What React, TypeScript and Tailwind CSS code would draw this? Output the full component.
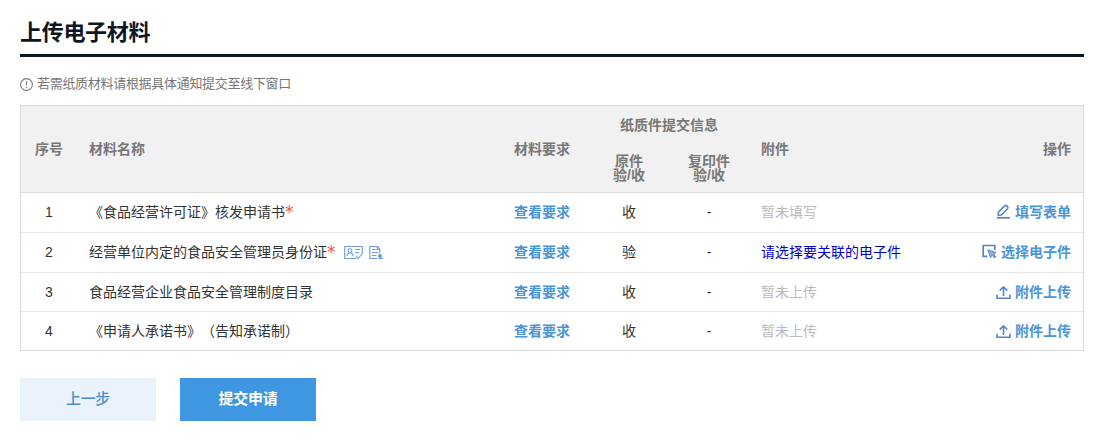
import type { ReactNode } from "react";
import clsx from "clsx";

type Material = {
  name: string;
  required?: boolean;
  hasIcons?: boolean;
  original: string;
  attachment: string;
  linked?: boolean;
  action: string;
  icon: ReactNode;
  height: string;
};

const InfoIcon = () => (
  <svg width="13" height="13" viewBox="0 0 13 13" fill="none" stroke="#777" strokeWidth="1.1">
    <circle cx="6.5" cy="6.5" r="5.9" />
    <path d="M6.5 3.2v4.3M6.5 8.7v1.2" />
  </svg>
);

const EditIcon = () => (
  <svg width="15" height="15" viewBox="0 0 15 15" fill="none" stroke="#5585c8" strokeWidth="1.5">
    <path d="M2.2 11.4V8.4L8.6 1.9Q9.6 1 10.7 1.7L11.6 2.6Q12.4 3.6 11.5 4.7L5.2 11.1Z" />
    <path d="M1 13.8H14" strokeWidth="1.7" />
  </svg>
);

const SelectIcon = () => (
  <svg width="15" height="15" viewBox="0 0 15 15" fill="none" stroke="#5585c8" strokeWidth="1.7">
    <path d="M5.2 12.3H1.2V1.5H12.8V5.8" />
    <path
      d="M5.8 5.8L14 8.6L11.4 9.8L14 12.8L12.6 14L10 11.1L8.5 13.6Z"
      fill="#5585c8"
      fillOpacity="0.65"
      strokeWidth="1"
    />
  </svg>
);

const UploadIcon = () => (
  <svg width="15" height="15" viewBox="0 0 15 15" fill="none" stroke="#5585c8" strokeWidth="1.6">
    <path d="M7.5 11V2M3.7 5.6L7.5 1.8L11.3 5.6" />
    <path d="M1 9.5V13.2H14V9.5" />
  </svg>
);

const CardIcon = () => (
  <svg width="19" height="15" viewBox="0 0 19 15" fill="none" stroke="#6f9ae0" strokeWidth="1.1">
    <path d="M12.5 13.5H0.7V1.5H18.2V9" />
    <path d="M12.2 11L14.2 13.4L18.2 9" />
    <circle cx="6" cy="5.6" r="1.9" />
    <path d="M2.9 11Q3.3 7.8 6 7.8T9.1 11M11.3 4.5H16M11.3 7.5H15" />
  </svg>
);

const FileIcon = () => (
  <svg width="14" height="15" viewBox="0 0 14 15" fill="none" stroke="#6f9ae0" strokeWidth="1.1">
    <path d="M8 13.5H0.8V1.5H8.3L10.8 4V8.5" />
    <path d="M8.2 1.5V4.5H10.8M2.8 4.5H6.5M2.8 7.5H9M2.8 10.5H7.5" />
    <circle cx="11" cy="11" r="1.4" fill="#6f9ae0" />
    <path d="M9.3 13.5H14" />
  </svg>
);

const materials: Material[] = [
  {
    name: "《食品经营许可证》核发申请书",
    required: true,
    original: "收",
    attachment: "暂未填写",
    action: "填写表单",
    icon: <EditIcon />,
    height: "h-10 pb-0.5",
  },
  {
    name: "经营单位内定的食品安全管理员身份证",
    required: true,
    hasIcons: true,
    original: "验",
    attachment: "请选择要关联的电子件",
    linked: true,
    action: "选择电子件",
    icon: <SelectIcon />,
    height: "h-10 pb-0.5",
  },
  {
    name: "食品经营企业食品安全管理制度目录",
    original: "收",
    attachment: "暂未上传",
    action: "附件上传",
    icon: <UploadIcon />,
    height: "h-[39px]",
  },
  {
    name: "《申请人承诺书》（告知承诺制）",
    original: "收",
    attachment: "暂未上传",
    action: "附件上传",
    icon: <UploadIcon />,
    height: "h-[39px]",
  },
];

const App = () => {
  return (
    <div className="h-[448px] bg-white pr-4 pl-5 font-['Liberation_Sans','Noto_Sans_CJK_SC',sans-serif] text-sm text-[#333] [text-spacing-trim:space-all]">
      <h2 className="h-[57px] border-b-3 border-[#0f1623] pt-[17px] text-[22px] leading-8 font-bold tracking-[-0.3px] text-[#0f1623]">
        上传电子材料
      </h2>

      <div className="mt-[17px] flex h-5 items-center gap-1 text-[13px] tracking-[-0.3px] text-[#777]">
        <InfoIcon />
        <span>若需纸质材料请根据具体通知提交至线下窗口</span>
      </div>

      <div className="mt-[11px] border border-b-0 border-[#dcdcdc]">
        <div className="grid h-[87px] grid-cols-[56px_425px_87px_160px_auto_1fr] items-center border-b border-[#dcdcdc] bg-[#f1f1f1] font-bold text-[#777]">
          <div className="text-center">序号</div>
          <div className="pl-3">材料名称</div>
          <div className="pl-3">材料要求</div>
          <div className="flex h-full flex-col">
            <div className="flex h-[38px] items-center justify-center">纸质件提交信息</div>
            <div className="grid flex-1 grid-cols-2 items-center text-center leading-[14px]">
              <div>
                原件
                <br />
                验/收
              </div>
              <div>
                复印件
                <br />
                验/收
              </div>
            </div>
          </div>
          <div className="pl-3">附件</div>
          <div className="pr-3 text-right">操作</div>
        </div>

        {materials.map((item, index) => (
          <div
            key={index}
            className={clsx(
              "grid grid-cols-[56px_425px_87px_80px_80px_auto_1fr] items-center border-b",
              index === materials.length - 1 ? "border-[#dcdcdc]" : "border-[#e8e8e8]",
              item.height
            )}
          >
            <div className="text-center">{index + 1}</div>
            <div className={clsx("flex items-center pl-3 whitespace-nowrap", item.required && "pt-px")}>
              <span>{item.name}</span>
              {item.required && (
                <span className="h-5 font-['DejaVu_Sans'] text-[17px] leading-5 text-[#f55050]">*</span>
              )}
              {item.hasIcons && (
                <span className="ml-2 flex items-center gap-1.5 pt-px">
                  <CardIcon />
                  <FileIcon />
                </span>
              )}
            </div>
            <a className="pl-3 font-bold whitespace-nowrap text-[#4a94d8]">查看要求</a>
            <div className="text-center">{item.original}</div>
            <div className="text-center">-</div>
            <div className={clsx("pl-3", item.linked ? "text-[#0000cd]" : "text-[#bbb]")}>{item.attachment}</div>
            <a className="flex items-center justify-end gap-1 pr-3 font-bold text-[#4a94d8]">
              {item.icon}
              {item.action}
            </a>
          </div>
        ))}
      </div>

      <div className="mt-[27px] flex gap-6 text-[15px] tracking-[-0.3px]">
        <button className="h-[43px] w-[136px] bg-[#eaf3fb] pb-0.5 font-medium text-[#4a8ed0]">上一步</button>
        <button className="h-[43px] w-[136px] bg-[#3e97e0] pb-0.5 font-bold text-white">提交申请</button>
      </div>
    </div>
  );
};

export default App;
